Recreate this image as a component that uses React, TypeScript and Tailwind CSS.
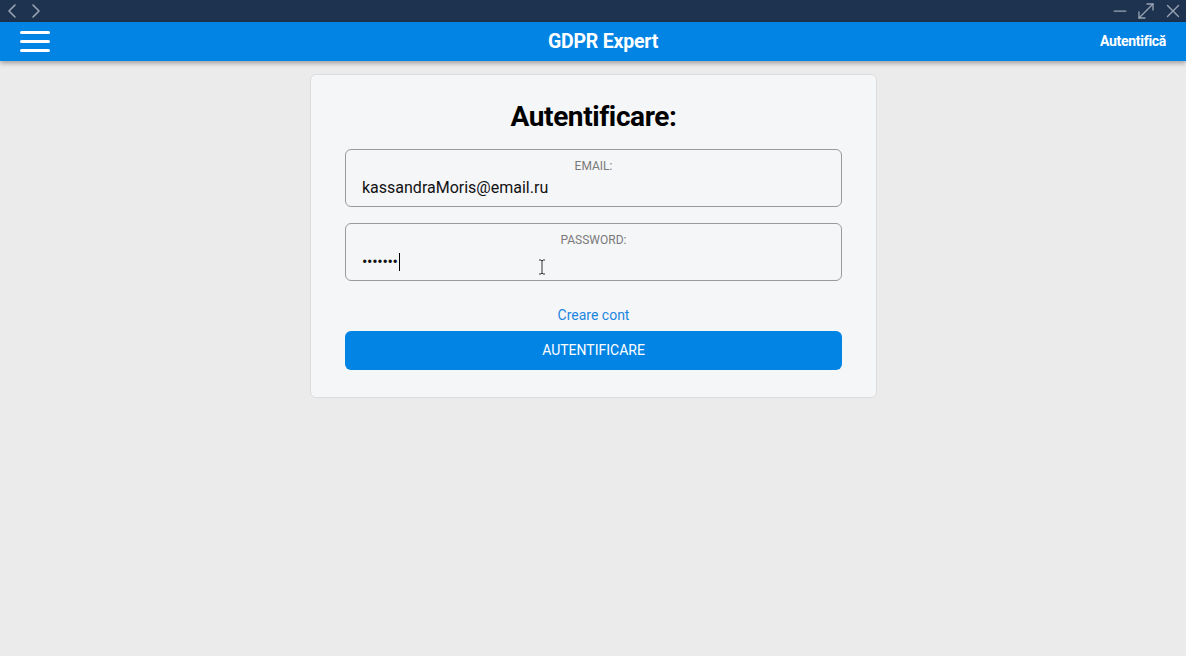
import { ChevronLeft, ChevronRight, Minus, MoveDiagonal, X } from "lucide-react";

function Field({ label, value, caret }: { label: string; value: string; caret?: boolean }) {
  return (
    <div className="relative h-[58px] rounded-[6px] border border-[#9a9a9a] pl-[16px] pr-4 pt-[9px]">
      <div className="text-center text-[12px] leading-[14px] text-[#7a7a7a]">{label}</div>
      <div className="mt-[6px] flex items-center text-[16px] leading-[18px] text-[#111]">
        <span className={caret ? "tracking-[-0.3px]" : ""}>{value}</span>
        {caret && <span className="ml-[1px] inline-block h-[18px] w-px bg-black" />}
      </div>
    </div>
  );
}

export default function App() {
  return (
    <div className="flex h-[656px] w-[1186px] flex-col bg-[#ebebeb] font-['Roboto','Liberation_Sans',sans-serif]">
      <div className="flex h-[22px] items-center justify-between overflow-hidden bg-[#1d3350] text-[#9aa5b4]">
        <div className="flex items-center pl-0">
          <ChevronLeft size={24} strokeWidth={1.6} />
          <ChevronRight size={24} strokeWidth={1.6} />
        </div>
        <div className="flex items-center gap-[4px] pr-[2px]">
          <Minus size={20} strokeWidth={1.5} />
          <MoveDiagonal size={24} strokeWidth={1.3} />
          <X size={22} strokeWidth={1.5} />
        </div>
      </div>
      <div className="relative z-10 flex h-[39px] items-center justify-between bg-[#0284e4] px-5 text-white shadow-[0_2px_5px_rgba(0,0,0,0.35)]">
        <div className="flex w-[30px] flex-col gap-[6px]">
          <span className="h-[3px] rounded-sm bg-white" />
          <span className="h-[3px] rounded-sm bg-white" />
          <span className="h-[3px] rounded-sm bg-white" />
        </div>
        <div className="ml-[56px] text-[19.5px] font-bold tracking-[-0.2px]">GDPR Expert</div>
        <div className="text-[14px] font-bold tracking-[-0.3px]">Autentifică</div>
      </div>
      <div className="flex justify-center pl-px pt-[13px]">
        <div className="relative w-[567px] rounded-[6px] border border-[#dcdcdc] bg-[#f5f6f8] px-[34px] pb-[27px] pt-[25px]">
          <h1 className="text-center text-[28px] font-bold leading-[34px] tracking-[-0.4px] text-black">
            Autentificare:
          </h1>
          <div className="mt-[15px] flex flex-col gap-[16px]">
            <Field label="EMAIL:" value="kassandraMoris@email.ru" />
            <Field label="PASSWORD:" value="•••••••" caret />
          </div>
          <div className="mt-[25px] text-center text-[14px] leading-[18px] text-[#1a86e0]">Creare cont</div>
          <button className="mt-[7px] flex h-[39px] w-full items-center justify-center rounded-[6px] bg-[#0284e4] text-[14px] text-white">
            AUTENTIFICARE
          </button>
          <svg className="absolute left-[227px] top-[184px]" width="8" height="16" viewBox="0 0 8 16">
            <path d="M1 1h2l1 1 1-1h2M4 2v12M1 15h2l1-1 1 1h2" stroke="#333" strokeWidth="1" fill="none" />
          </svg>
        </div>
      </div>
    </div>
  );
}
